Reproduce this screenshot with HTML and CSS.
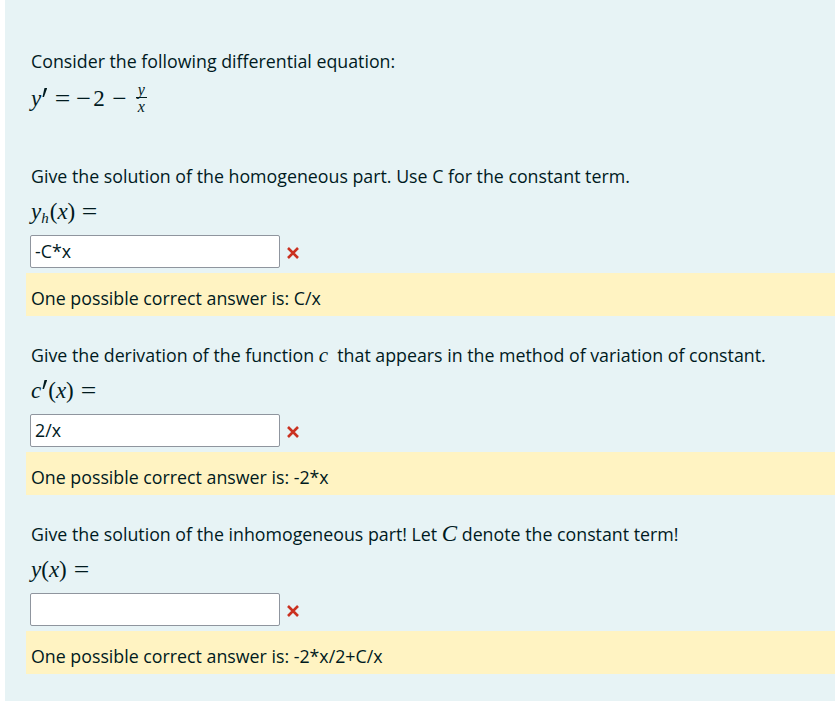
FILE: index.html
```html
<!DOCTYPE html>
<html>
<head>
<meta charset="utf-8">
<link rel="stylesheet" href="styles.css">
</head>
<body>
<div class="formulation">
  <div class="intro">
    <p class="qtext">Consider the following differential equation:</p>
    <div class="math"><span class="mi">y</span><span class="prime"></span><span class="mo rel">=</span><span class="mo neg">−</span><span class="mn">2</span><span class="mo bin">−</span><span class="frac"><span class="num mi">y</span><span class="den mi">x</span></span></div>
  </div>

  <div class="part">
    <p class="qtext">Give the solution of the homogeneous part. Use C for the constant term.</p>
    <div class="math"><span class="mi">y</span><span class="sub mi">h</span><span class="mp">(</span><span class="mi">x</span><span class="mp">)</span><span class="mo rel">=</span></div>
    <div class="answer"><div class="input">-C*x</div><svg class="wrong" viewBox="0 0 14 14"><path d="M2 2 L12 12 M12 2 L2 12"/></svg></div>
    <div class="feedback">One possible correct answer is: C/x</div>
  </div>

  <div class="part">
    <p class="qtext">Give the derivation of the function <span class="imath">c</span>&nbsp; that appears in the method of variation of constant.</p>
    <div class="math"><span class="mi">c</span><span class="prime"></span><span class="mp">(</span><span class="mi">x</span><span class="mp">)</span><span class="mo rel">=</span></div>
    <div class="answer"><div class="input">2/x</div><svg class="wrong" viewBox="0 0 14 14"><path d="M2 2 L12 12 M12 2 L2 12"/></svg></div>
    <div class="feedback">One possible correct answer is: -2*x</div>
  </div>

  <div class="part">
    <p class="qtext">Give the solution of the inhomogeneous part! Let <span class="imath big">C</span> denote the constant term!</p>
    <div class="math"><span class="mi">y</span><span class="mp">(</span><span class="mi">x</span><span class="mp">)</span><span class="mo rel">=</span></div>
    <div class="answer"><div class="input"></div><svg class="wrong" viewBox="0 0 14 14"><path d="M2 2 L12 12 M12 2 L2 12"/></svg></div>
    <div class="feedback">One possible correct answer is: -2*x/2+C/x</div>
  </div>
</div>
</body>
</html>
```
FILE: styles.css
```css
html, body {
  margin: 0;
  padding: 0;
  background: #ffffff;
}
body {
  font-family: "Open Sans", "Noto Sans", sans-serif;
  font-size: 17.8px;
  color: #001a1e;
}
.formulation {
  margin-left: 5px;
  background: #e7f3f5;
  padding: 49px 0 40px 21px;
  min-height: 701px;
  box-sizing: border-box;
}
.qtext {
  margin: 0;
  padding-left: 5px;
  line-height: 24px;
}
.math {
  margin-top: 10px;
  padding-left: 5px;
  height: 32px;
  line-height: 28px;
  font-family: "Liberation Serif", "DejaVu Serif", serif;
  font-size: 23px;
  white-space: nowrap;
}
.mi {
  font-style: italic;
}
.mo {
  display: inline-block;
}
.mo.rel {
  margin: 0 8px 0 8px;
  transform: scaleX(1.2);
}
.mo.neg {
  transform: scaleX(1.15);
  margin-right: 3px;
}
.mo.bin {
  margin: 0 9px 0 8px;
  transform: scaleX(1.1);
}
.mp {
  font-style: normal;
}
.prime {
  display: inline-block;
  width: 5px;
  height: 9px;
  background: #001a1e;
  clip-path: polygon(45% 0, 100% 0, 35% 100%, 5% 100%);
  vertical-align: 9px;
  margin-left: 1px;
  margin-right: 1px;
}
.sub {
  font-size: 15px;
  vertical-align: -4px;
  margin-right: 1px;
}
.frac {
  display: inline-flex;
  flex-direction: column;
  align-items: center;
  font-size: 16px;
  line-height: 13px;
  vertical-align: 11px;
  margin-left: 1px;
}
.frac .num {
  padding: 0 2px 1px;
}
.frac .den {
  border-top: 1px solid #001a1e;
  padding: 2px 2px 0;
}
.imath {
  font-family: "Liberation Serif", "DejaVu Serif", serif;
  font-style: italic;
  font-size: 21px;
}
.imath.big {
  font-size: 23px;
}
.intro {
  margin-bottom: 49px;
}
.part + .part {
  margin-top: 27px;
}
.answer {
  margin-top: 5px;
  padding-left: 4px;
  display: flex;
  align-items: center;
}
.input {
  width: 250px;
  height: 33px;
  box-sizing: border-box;
  border: 1px solid #8f959e;
  border-radius: 2px;
  background: #ffffff;
  padding: 0 4px;
  line-height: 31px;
}
.wrong {
  width: 14px;
  height: 14px;
  margin-left: 6px;
  margin-top: 2px;
}
.wrong path {
  stroke: #ca3120;
  stroke-width: 2.6;
  fill: none;
}
.feedback {
  margin-top: 5px;
  background: #fff3c2;
  height: 43px;
  box-sizing: border-box;
  padding: 13px 5px 6px;
  line-height: 24px;
}
```
